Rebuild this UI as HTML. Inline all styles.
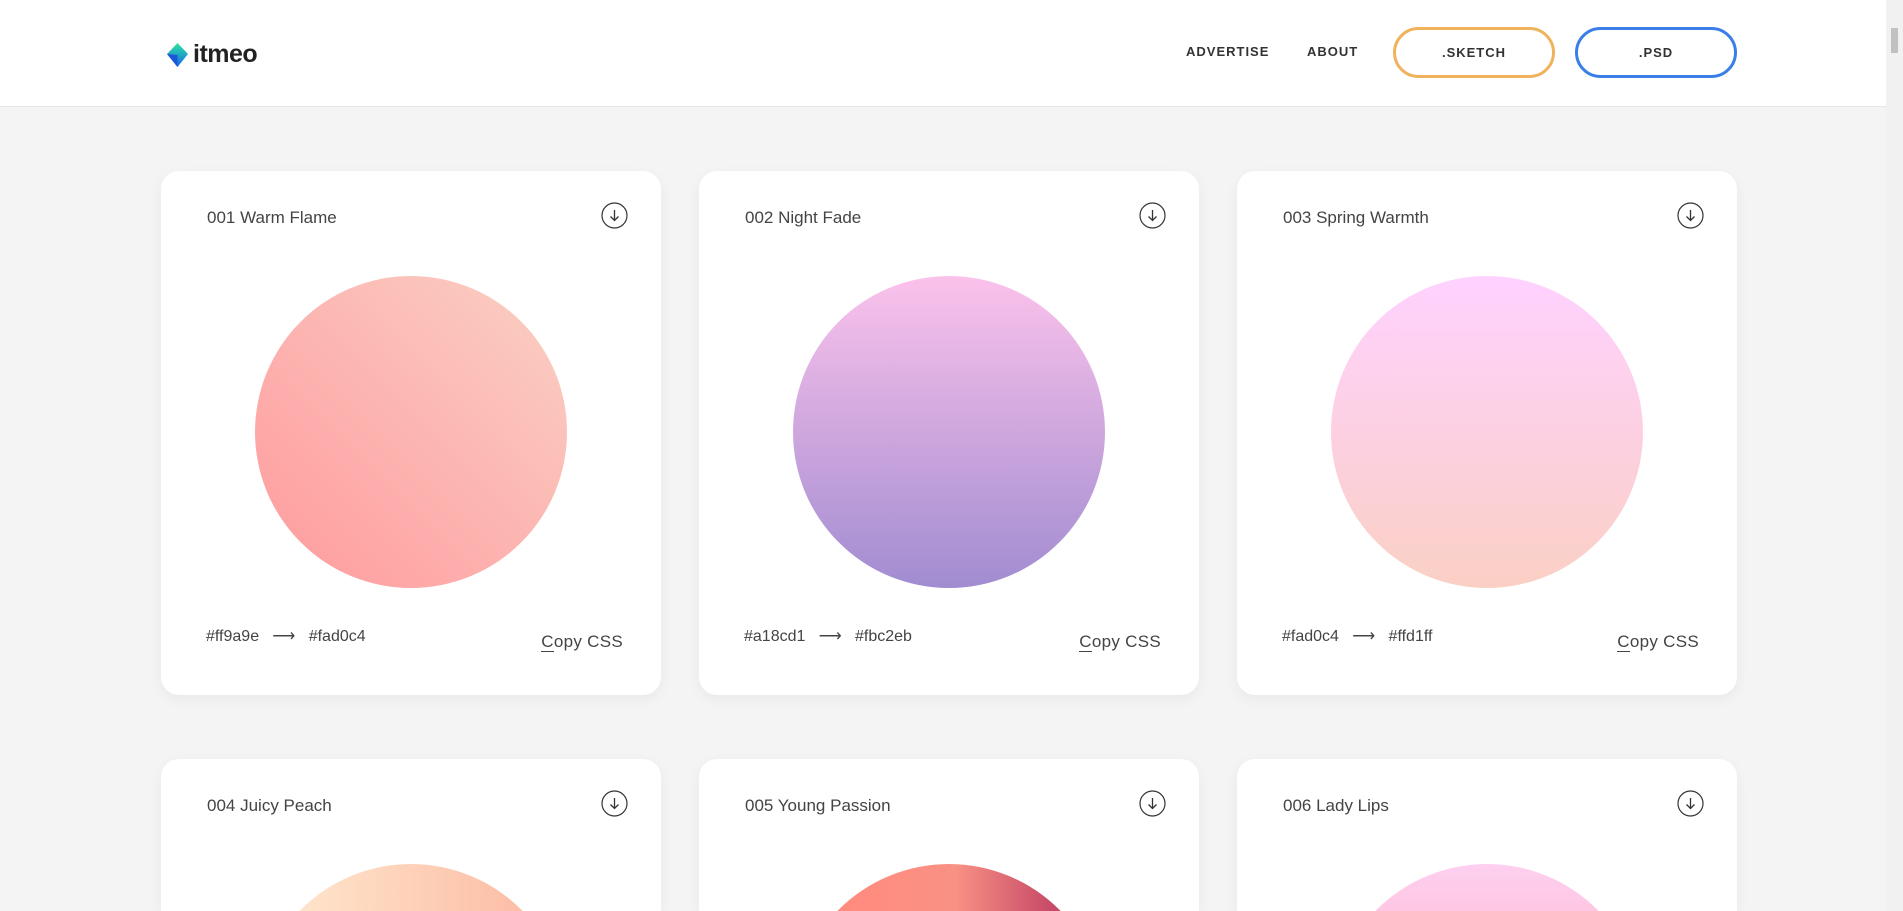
<!DOCTYPE html>
<html style="height:911px;overflow:hidden"><head><meta charset="utf-8"><style>
*{box-sizing:border-box;margin:0;padding:0}
html,body{width:1903px;height:911px;overflow:hidden}
body{background:#f4f4f4;font-family:"Liberation Sans",sans-serif}
#w{position:relative;width:1903px;height:911px;overflow:hidden;background:#f4f4f4}
.hdr{position:absolute;left:0;top:0;width:1886px;height:107px;background:#fff;border-bottom:1px solid #e6e6e6}
.sb{position:absolute;left:1886px;top:0;width:17px;height:911px;background:#f1f1f1}
.sb i{position:absolute;left:5px;top:28px;width:7px;height:25px;background:#c1c1c1}
.logo{position:absolute;left:165px;top:40px;display:flex;align-items:center}
.logo span{font-weight:bold;font-size:25px;color:#222;margin-left:3px;letter-spacing:-0.5px}
.nav{position:absolute;top:44px;font-size:13px;font-weight:bold;letter-spacing:1px;color:#333}
.btn{position:absolute;top:27px;width:162px;height:51px;border-radius:26px;border:3px solid;font-size:13px;font-weight:bold;letter-spacing:1px;color:#333;display:flex;align-items:center;justify-content:center}
.card{position:absolute;width:500px;height:524px;background:#fff;border-radius:18px;box-shadow:0 4px 14px rgba(0,0,0,.05);overflow:hidden}
.r2{height:152px;border-radius:18px 18px 0 0}
.t{position:absolute;left:46px;top:37px;font-size:17px;color:#444}
.dl{position:absolute;left:440px;top:31px;width:27px;height:27px}
.c{position:absolute;left:94px;top:105px;width:312px;height:312px;border-radius:50%}
.hex{position:absolute;left:45px;top:455px;font-size:16px;color:#444}
.cp{position:absolute;right:38px;top:461px;font-size:17px;color:#444;letter-spacing:.3px}
.cp u{text-decoration:none;border-bottom:1.5px solid #444}
</style></head><body><div id="w">
<div class="hdr">
 <div class="logo"><svg width="25" height="28" viewBox="0 0 25 28"><defs><linearGradient id="lg" x1="0" y1="0" x2="0" y2="1"><stop offset="0" stop-color="#2ee59d"/><stop offset="1" stop-color="#1466f0"/></linearGradient></defs><path d="M12.5 2 L23 13 L12.5 26 L2 13 Z" fill="url(#lg)"/><path d="M2 13 L12.5 14 L12.5 26 Z" fill="#1a56d6"/></svg><span>itmeo</span></div>
 <div class="nav" style="left:1186px">ADVERTISE</div>
 <div class="nav" style="left:1307px">ABOUT</div>
 <div class="btn" style="left:1393px;border-color:#f0b25a">.SKETCH</div>
 <div class="btn" style="left:1575px;border-color:#3a7ee8">.PSD</div>
</div>
<div class="sb"><i></i></div>

<div class="card" style="left:161px;top:171px"><div class="t">001 Warm Flame</div><svg class="dl" viewBox="0 0 27 27"><circle cx="13.5" cy="13.5" r="12.5" fill="none" stroke="#333" stroke-width="1.2"/><path d="M13.5 8v10M9.5 14.5l4 4 4-4" fill="none" stroke="#333" stroke-width="1.3"/></svg><div class="c" style="background:linear-gradient(45deg,#ff9a9e 0%,#fad0c4 99%)"></div><div class="hex">#ff9a9e &nbsp;&nbsp;⟶&nbsp;&nbsp; #fad0c4</div><div class="cp"><u>C</u>opy CSS</div></div>
<div class="card" style="left:699px;top:171px"><div class="t">002 Night Fade</div><svg class="dl" viewBox="0 0 27 27"><circle cx="13.5" cy="13.5" r="12.5" fill="none" stroke="#333" stroke-width="1.2"/><path d="M13.5 8v10M9.5 14.5l4 4 4-4" fill="none" stroke="#333" stroke-width="1.3"/></svg><div class="c" style="background:linear-gradient(to top,#a18cd1 0%,#fbc2eb 100%)"></div><div class="hex">#a18cd1 &nbsp;&nbsp;⟶&nbsp;&nbsp; #fbc2eb</div><div class="cp"><u>C</u>opy CSS</div></div>
<div class="card" style="left:1237px;top:171px"><div class="t">003 Spring Warmth</div><svg class="dl" viewBox="0 0 27 27"><circle cx="13.5" cy="13.5" r="12.5" fill="none" stroke="#333" stroke-width="1.2"/><path d="M13.5 8v10M9.5 14.5l4 4 4-4" fill="none" stroke="#333" stroke-width="1.3"/></svg><div class="c" style="background:linear-gradient(to top,#fad0c4 0%,#ffd1ff 100%)"></div><div class="hex">#fad0c4 &nbsp;&nbsp;⟶&nbsp;&nbsp; #ffd1ff</div><div class="cp"><u>C</u>opy CSS</div></div>

<div class="card r2" style="left:161px;top:759px"><div class="t">004 Juicy Peach</div><svg class="dl" viewBox="0 0 27 27"><circle cx="13.5" cy="13.5" r="12.5" fill="none" stroke="#333" stroke-width="1.2"/><path d="M13.5 8v10M9.5 14.5l4 4 4-4" fill="none" stroke="#333" stroke-width="1.3"/></svg><div class="c" style="background:linear-gradient(to right,#ffecd2 0%,#fcb69f 100%)"></div></div>
<div class="card r2" style="left:699px;top:759px"><div class="t">005 Young Passion</div><svg class="dl" viewBox="0 0 27 27"><circle cx="13.5" cy="13.5" r="12.5" fill="none" stroke="#333" stroke-width="1.2"/><path d="M13.5 8v10M9.5 14.5l4 4 4-4" fill="none" stroke="#333" stroke-width="1.3"/></svg><div class="c" style="background:linear-gradient(to right,#ff8177 0%,#ff867a 0%,#ff8c7f 21%,#f99185 52%,#cf556c 78%,#b12a5b 100%)"></div></div>
<div class="card r2" style="left:1237px;top:759px"><div class="t">006 Lady Lips</div><svg class="dl" viewBox="0 0 27 27"><circle cx="13.5" cy="13.5" r="12.5" fill="none" stroke="#333" stroke-width="1.2"/><path d="M13.5 8v10M9.5 14.5l4 4 4-4" fill="none" stroke="#333" stroke-width="1.3"/></svg><div class="c" style="background:linear-gradient(to top,#ff9a9e 0%,#fecfef 99%,#fecfef 100%)"></div></div>
</div></body></html>
